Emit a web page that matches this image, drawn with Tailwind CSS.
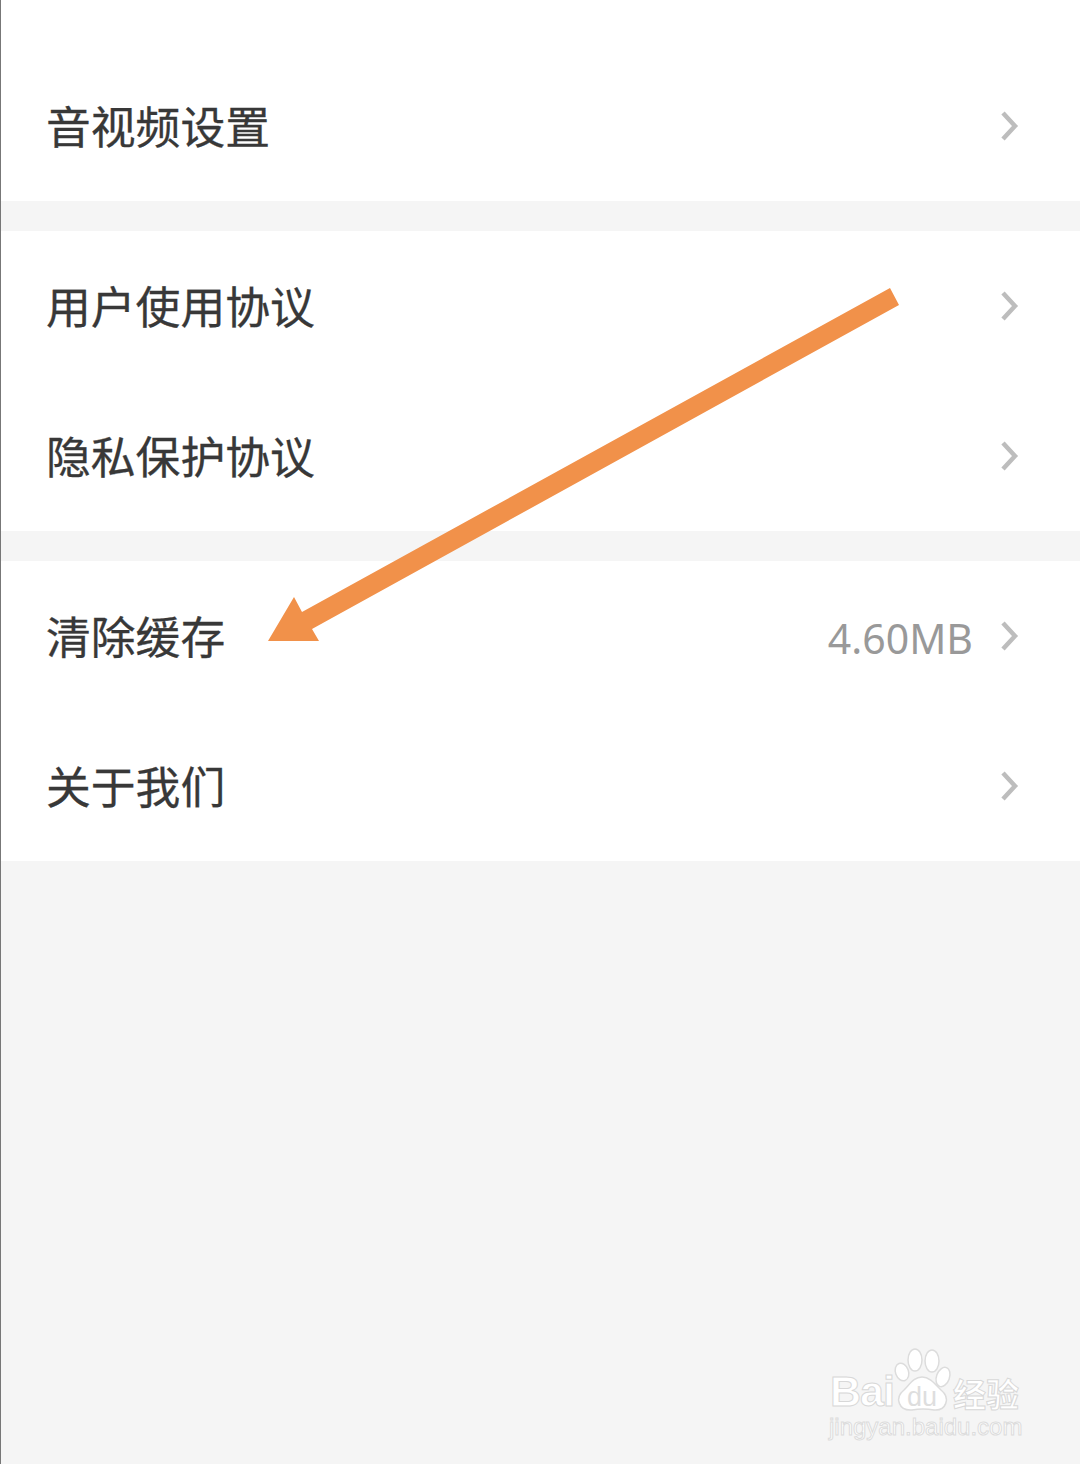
<!DOCTYPE html>
<html lang="zh-CN">
<head>
<meta charset="utf-8">
<script src="https://cdn.jsdelivr.net/npm/@tailwindcss/browser@4"></script>
</head>
<body class="m-0">
<div class="relative w-[1080px] h-[1464px] overflow-hidden bg-[#f5f5f5] border-l border-[#777777] font-['Noto_Sans_CJK_SC','Noto_Sans',sans-serif] text-[#383838]">
  <section class="bg-white pt-[51px] mb-[30px]">
    <div class="h-[150px] flex items-center justify-between pl-[45px] pr-[60px]">
      <span class="text-[44.8px] leading-none mb-[2px] [-webkit-text-stroke:0.3px_#383838]">音视频设置</span>
      <svg class="w-[20px] h-[32px]" viewBox="0 0 20 32" fill="none" stroke="#bdbdbd" stroke-width="4.5"><path d="M3 3 L15 16 L3 29"/></svg>
    </div>
  </section>
  <section class="bg-white mb-[30px]">
    <div class="h-[150px] flex items-center justify-between pl-[45px] pr-[60px]">
      <span class="text-[44.8px] leading-none mb-[2px] [-webkit-text-stroke:0.3px_#383838]">用户使用协议</span>
      <svg class="w-[20px] h-[32px]" viewBox="0 0 20 32" fill="none" stroke="#bdbdbd" stroke-width="4.5"><path d="M3 3 L15 16 L3 29"/></svg>
    </div>
    <div class="h-[150px] flex items-center justify-between pl-[45px] pr-[60px]">
      <span class="text-[44.8px] leading-none mb-[2px] [-webkit-text-stroke:0.3px_#383838]">隐私保护协议</span>
      <svg class="w-[20px] h-[32px]" viewBox="0 0 20 32" fill="none" stroke="#bdbdbd" stroke-width="4.5"><path d="M3 3 L15 16 L3 29"/></svg>
    </div>
  </section>
  <section class="bg-white">
    <div class="h-[150px] flex items-center justify-between pl-[45px] pr-[60px]">
      <span class="text-[44.8px] leading-none mb-[2px] [-webkit-text-stroke:0.3px_#383838]">清除缓存</span>
      <div class="flex items-center gap-[27px]">
        <span class="text-[41px] leading-none text-[#999999] font-['Noto_Sans',sans-serif] mt-[4px]">4.60MB</span>
        <svg class="w-[20px] h-[32px]" viewBox="0 0 20 32" fill="none" stroke="#bdbdbd" stroke-width="4.5"><path d="M3 3 L15 16 L3 29"/></svg>
      </div>
    </div>
    <div class="h-[150px] flex items-center justify-between pl-[45px] pr-[60px]">
      <span class="text-[44.8px] leading-none mb-[2px] [-webkit-text-stroke:0.3px_#383838]">关于我们</span>
      <svg class="w-[20px] h-[32px]" viewBox="0 0 20 32" fill="none" stroke="#bdbdbd" stroke-width="4.5"><path d="M3 3 L15 16 L3 29"/></svg>
    </div>
  </section>

  <svg class="absolute left-[-1px] top-0 w-[1080px] h-[1464px] pointer-events-none" viewBox="0 0 1080 1464">
    <polygon fill="#f1914a" points="890,288 899,305 312,629 319,641 268,641 294,597 302,612"/>
  </svg>

  <div class="absolute left-[825px] top-[1346px] w-[200px] h-[96px] text-white">
    <svg class="absolute left-0 top-0 w-[200px] h-[70px]" viewBox="0 0 200 70">
      <g fill="#ffffff" stroke="#dcdcdc" stroke-width="1.5">
        <ellipse cx="76" cy="26" rx="6.5" ry="9" transform="rotate(-20 76 26)"/>
        <ellipse cx="89" cy="14" rx="7" ry="11"/>
        <ellipse cx="106" cy="15" rx="7" ry="11"/>
        <ellipse cx="117" cy="31" rx="6.5" ry="10" transform="rotate(20 117 31)"/>
        <path d="M96 31 C88 31 84 38 78 44 C68 52 73 65 86 64 C92 63 102 63 108 64 C120 65 125 52 115 44 C109 38 104 31 96 31 Z"/>
      </g>
    </svg>
    <span class="absolute left-[4px] top-[21px] text-[43px] leading-[48px] font-bold font-['Liberation_Sans',sans-serif] tracking-[-1px] [-webkit-text-stroke:1px_#d8d8d8]">Bai</span>
    <span class="absolute left-[81px] top-[37px] text-[27px] leading-[28px] font-['Liberation_Sans',sans-serif] text-[#dedede]">du</span>
    <span class="absolute left-[127px] top-[29px] text-[33px] leading-[36px] font-bold [-webkit-text-stroke:1px_#d8d8d8]">经验</span>
    <span class="absolute left-[3px] top-[67px] text-[24px] leading-[28px] font-['Liberation_Sans',sans-serif] whitespace-nowrap [-webkit-text-stroke:1px_#dcdcdc]">jingyan.baidu.com</span>
  </div>
</div>
</body>
</html>
